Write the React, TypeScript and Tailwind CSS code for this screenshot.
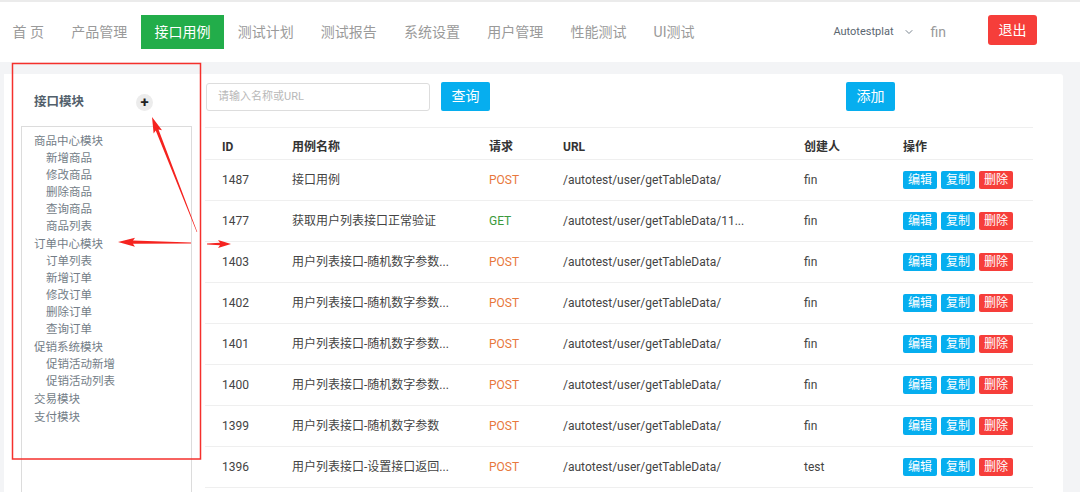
import React from 'react'
import { ChevronDown } from 'lucide-react'

const navItems = ['首 页', '产品管理', '接口用例', '测试计划', '测试报告', '系统设置', '用户管理', '性能测试', 'UI测试']

const tree = [
  { title: '商品中心模块', children: ['新增商品', '修改商品', '删除商品', '查询商品', '商品列表'] },
  { title: '订单中心模块', children: ['订单列表', '新增订单', '修改订单', '删除订单', '查询订单'] },
  { title: '促销系统模块', children: ['促销活动新增', '促销活动列表'] },
  { title: '交易模块', children: [] },
  { title: '支付模块', children: [] },
]

const rows = [
  { id: 1487, name: '接口用例', method: 'POST', url: '/autotest/user/getTableData/', user: 'fin' },
  { id: 1477, name: '获取用户列表接口正常验证', method: 'GET', url: '/autotest/user/getTableData/11...', user: 'fin' },
  { id: 1403, name: '用户列表接口-随机数字参数...', method: 'POST', url: '/autotest/user/getTableData/', user: 'fin' },
  { id: 1402, name: '用户列表接口-随机数字参数...', method: 'POST', url: '/autotest/user/getTableData/', user: 'fin' },
  { id: 1401, name: '用户列表接口-随机数字参数...', method: 'POST', url: '/autotest/user/getTableData/', user: 'fin' },
  { id: 1400, name: '用户列表接口-随机数字参数...', method: 'POST', url: '/autotest/user/getTableData/', user: 'fin' },
  { id: 1399, name: '用户列表接口-随机数字参数', method: 'POST', url: '/autotest/user/getTableData/', user: 'fin' },
  { id: 1396, name: '用户列表接口-设置接口返回...', method: 'POST', url: '/autotest/user/getTableData/', user: 'test' },
]

// tapered arrow polygon from tail to tip
const arrow = (tx: number, ty: number, px: number, py: number, headLen: number, headW: number, w0: number, w1: number) => {
  const len = Math.hypot(px - tx, py - ty)
  const dx = (px - tx) / len
  const dy = (py - ty) / len
  const nx = -dy
  const ny = dx
  const bx = px - dx * headLen
  const by = py - dy * headLen
  const pts = [
    [tx + (nx * w0) / 2, ty + (ny * w0) / 2],
    [bx + (nx * w1) / 2, by + (ny * w1) / 2],
    [bx + (nx * headW) / 2 - dx * 2, by + (ny * headW) / 2 - dy * 2],
    [px, py],
    [bx - (nx * headW) / 2 - dx * 2, by - (ny * headW) / 2 - dy * 2],
    [bx - (nx * w1) / 2, by - (ny * w1) / 2],
    [tx - (nx * w0) / 2, ty - (ny * w0) / 2],
  ]
  return pts.map((p) => p.join(',')).join(' ')
}

const Annotations = () => (
  <svg className="pointer-events-none absolute left-0 top-0" width="1080" height="492">
    <rect x="12.5" y="63.5" width="188" height="395.5" fill="none" stroke="#f5302c" strokeWidth="1.5" />
    <polygon points={arrow(197, 232, 152, 117, 14, 9, 0.6, 3)} fill="#f5231f" />
    <polygon points={arrow(191, 243, 118, 242, 15, 9, 1, 3.2)} fill="#f5231f" />
    <polygon points={arrow(207, 244, 231, 244, 11, 8, 1, 2.6)} fill="#f5231f" />
  </svg>
)

const App = () => {
  return (
    <div className="relative h-[492px] w-[1080px] overflow-hidden bg-[#f3f4f6] font-['Roboto','Noto_Sans_CJK_SC',sans-serif]">
      <header className="flex h-[62px] items-center border-t-2 border-[#ebebeb] bg-white">
        <nav className="-ml-[1px] flex items-center">
          {navItems.map((item) => (
            <div
              key={item}
              className={
                item === '接口用例'
                  ? 'flex h-[34px] items-center bg-[#22ad4a] px-[13.6px] text-[14px] text-white'
                  : 'flex h-[34px] items-center px-[13.6px] text-[14px] text-[#9a9a9a]'
              }
            >
              {item}
            </div>
          ))}
        </nav>
        <div className="ml-auto flex items-center pr-[43px]">
          <span className="text-[11px] text-[#5b6670]">Autotestplat</span>
          <ChevronDown className="ml-[9px] text-[#7a8590]" size={12} strokeWidth={2} />
          <span className="ml-[16px] text-[14px] text-[#9a9a9a]">fin</span>
          <button className="-mt-[4px] ml-[42px] flex h-[30px] w-[49px] items-center justify-center rounded-[3px] bg-[#f63e3a] text-[14px] text-white">
            退出
          </button>
        </div>
      </header>

      <div className="flex pl-[4px] pr-[17px] pt-[12px]">
        <aside className="flex h-[420px] w-[197px] flex-col bg-white pl-[17px] pr-[9px]">
          <div className="flex h-[52px] items-center pt-[4px]">
            <span className="pl-[13px] text-[12.5px] font-bold text-[#52606b]">接口模块</span>
            <span className="ml-[52px] flex h-[17px] w-[17px] items-center justify-center rounded-full bg-[#ececec] text-[15px] font-bold leading-none text-[#222]">
              +
            </span>
          </div>
          <div className="flex-1 border border-[#dcdcdc] pl-[12px] pt-[6px] text-[11.5px] leading-[17px] text-[#737d87]">
            {tree.map((node, i) => (
              <div key={node.title} className={i === 0 ? '' : 'mt-[1px]'}>
                <div>{node.title}</div>
                {node.children.map((c) => (
                  <div key={c} className="pl-[12px]">
                    {c}
                  </div>
                ))}
              </div>
            ))}
          </div>
        </aside>

        <main className="h-[420px] flex-1 rounded-tr-[3px] bg-white pl-[4px] pr-[30px]">
          <div className="flex h-[53px] items-start pt-[8px]">
            <div className="ml-[1px] mt-[1px] flex h-[28px] w-[224px] items-center rounded-[3px] border border-[#dddddd] pl-[11px] text-[11px] text-[#b8b8b8]">
              请输入名称或URL
            </div>
            <button className="ml-[11px] flex h-[29px] w-[49px] items-center justify-center rounded-[2px] bg-[#06aeef] text-[14px] text-white">
              查询
            </button>
            <button className="ml-[356px] flex h-[29px] w-[49px] items-center justify-center rounded-[2px] bg-[#06aeef] text-[14px] text-white">
              添加
            </button>
          </div>

          <div className="border-t border-[#efefef]">
            <div className="grid h-[32px] grid-cols-[70px_197px_74px_241px_99px_1fr] items-end border-b border-[#efefef] pb-[3px] pl-[17px] text-[12px] font-bold text-[#333]">
              <span>ID</span>
              <span>用例名称</span>
              <span>请求</span>
              <span>URL</span>
              <span>创建人</span>
              <span>操作</span>
            </div>
            {rows.map((r) => (
              <div
                key={r.id}
                className="grid h-[41px] grid-cols-[70px_197px_74px_241px_99px_1fr] items-center border-b border-[#efefef] pl-[17px] text-[12px] text-[#444]"
              >
                <span>{r.id}</span>
                <span className="whitespace-nowrap">{r.name}</span>
                <span className={r.method === 'GET' ? 'text-[#3a9a3c]' : 'text-[#e8783c]'}>{r.method}</span>
                <span className="whitespace-nowrap">{r.url}</span>
                <span>{r.user}</span>
                <div className="flex gap-[4px]">
                  <button className="flex h-[18px] w-[34px] items-center justify-center rounded-[2px] bg-[#06aeef] text-[12px] text-white">
                    编辑
                  </button>
                  <button className="flex h-[18px] w-[34px] items-center justify-center rounded-[2px] bg-[#06aeef] text-[12px] text-white">
                    复制
                  </button>
                  <button className="flex h-[18px] w-[34px] items-center justify-center rounded-[2px] bg-[#f63e3a] text-[12px] text-white">
                    删除
                  </button>
                </div>
              </div>
            ))}
          </div>
        </main>
      </div>

      <Annotations />
    </div>
  )
}

export default App
